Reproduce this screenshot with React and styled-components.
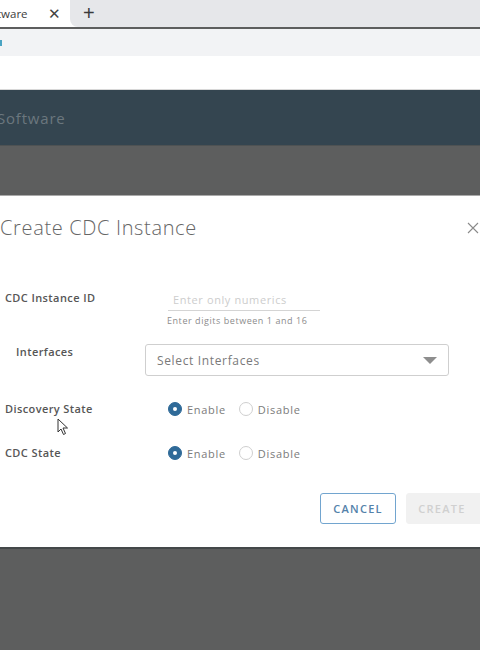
import React from "react";
import styled, { createGlobalStyle } from "styled-components";

const Global = createGlobalStyle`
  html, body { margin: 0; padding: 0; }
  body {
    width: 480px;
    height: 650px;
    overflow: hidden;
    background: #5d5e5e;
    font-family: "Open Sans", "Noto Sans", "Liberation Sans", sans-serif;
  }
  #root { width: 480px; height: 650px; }
`;

const Page = styled.div`
  width: 480px;
  height: 650px;
  display: flex;
  flex-direction: column;
  position: relative;
  overflow: hidden;
`;

const TabStrip = styled.div`
  height: 27px;
  display: flex;
  background: #ffffff;
`;

const ActiveTab = styled.div`
  width: 70px;
  display: flex;
  align-items: center;
  justify-content: space-between;
  padding: 0 9px 0 0;
  box-sizing: border-box;
  font-size: 11.5px;
  color: #3c3c3c;
`;

const TabText = styled.span`
  margin-left: -3px;
`;

const TabClose = styled.span`
  font-size: 15px;
  color: #444;
  font-family: "Liberation Sans", sans-serif;
`;

const TabRest = styled.div`
  flex: 1;
  background: #e6e7ea;
  border-bottom-left-radius: 8px;
  display: flex;
  align-items: center;
  padding-left: 13px;
  font-size: 20px;
  color: #3a3a3a;
  font-family: "Liberation Sans", sans-serif;
`;

const AddressBar = styled.div`
  height: 27px;
  margin-top: 2px;
  background: #f2f3f5;
  display: flex;
  align-items: center;
`;

const UrlTail = styled.span`
  width: 2px;
  height: 6px;
  background: #4aa3c2;
  display: block;
`;

const WhiteStrip = styled.div`
  height: 33px;
  background: #ffffff;
  border-bottom: 1px solid #d8d8d8;
`;

const AppHeader = styled.div`
  height: 55px;
  background: #344550;
  display: flex;
  align-items: center;
  border-bottom: 1px solid #4e5253;
`;

const Brand = styled.span`
  margin-left: -3px;
  font-size: 15px;
  color: #6b777e;
  letter-spacing: 0.8px;
`;

const Backdrop = styled.div`
  height: 49px;
  background: #5d5e5e;
  border-bottom: 1px solid #a9a9a9;
`;

const Modal = styled.div`
  height: 353px;
  background: #ffffff;
  box-sizing: border-box;
  padding-top: 20px;
  display: flex;
  flex-direction: column;
  border-bottom: 2px solid #444849;
`;

const TitleRow = styled.div`
  display: flex;
  align-items: center;
  justify-content: space-between;
  padding-right: 1px;
  height: 24px;
`;

const Title = styled.h2`
  margin: 0;
  font-size: 20px;
  line-height: 24px;
  font-weight: 300;
  color: #666;
  letter-spacing: 0.65px;
`;

const CloseBtn = styled.svg`
  width: 12px;
  height: 12px;
  display: block;
`;

const Form = styled.div`
  display: flex;
  flex-direction: column;
  padding-left: 5px;
  margin-top: 49px;
`;

const Row = styled.div`
  display: flex;
  align-items: flex-start;
  margin-top: ${(p) => p.$gap || 0}px;
`;

const Label = styled.div`
  width: ${(p) => 140 - (p.$indent || 0)}px;
  padding-left: ${(p) => p.$indent || 0}px;
  padding-top: ${(p) => p.$top || 0}px;
  font-size: 11px;
  line-height: ${(p) => p.$lh || 16}px;
  font-weight: 600;
  color: #565656;
  letter-spacing: 0.4px;
  flex-shrink: 0;
`;

const Control = styled.div`
  display: flex;
  flex-direction: column;
  padding-left: ${(p) => p.$offset || 0}px;
`;

const TextInput = styled.input`
  width: 152px;
  height: 22px;
  box-sizing: border-box;
  border: none;
  border-bottom: 1px solid #d4d4d4;
  padding: 0 0 0 5px;
  font-family: inherit;
  font-size: 11px;
  letter-spacing: 0.6px;
  outline: none;
  color: #555;
  &::placeholder { color: #cdcdcd; }
`;

const Helper = styled.div`
  margin-top: 4px;
  font-size: 9px;
  line-height: 12px;
  letter-spacing: 0.55px;
  color: #8c8c8c;
  margin-left: -1px;
`;

const Select = styled.div`
  width: 304px;
  height: 32px;
  box-sizing: border-box;
  border: 1px solid #cfcfcf;
  border-radius: 3px;
  display: flex;
  align-items: center;
  justify-content: space-between;
  padding: 0 11px 0 11px;
  font-size: 12px;
  letter-spacing: 0.65px;
  color: #7a7a7a;
`;

const Caret = styled.svg`
  width: 14px;
  height: 7px;
  display: block;
`;

const RadioGroup = styled.div`
  display: flex;
  align-items: center;
  height: 18px;
`;

const RadioItem = styled.label`
  display: flex;
  align-items: center;
  gap: 5px;
  margin-right: 13px;
  font-size: 11px;
  letter-spacing: 0.7px;
  color: #7b7b7b;
`;

const RadioDot = styled.span`
  width: 14px;
  height: 14px;
  box-sizing: border-box;
  border-radius: 50%;
  display: flex;
  align-items: center;
  justify-content: center;
  background: ${(p) => (p.$on ? "#2f6a98" : "#fff")};
  border: 1px solid ${(p) => (p.$on ? "#2f6a98" : "#cfcfcf")};
  &::after {
    content: "";
    width: 4px;
    height: 4px;
    border-radius: 50%;
    background: ${(p) => (p.$on ? "#fff" : "transparent")};
  }
`;

const Actions = styled.div`
  display: flex;
  gap: 10px;
  padding-left: 320px;
  margin-top: 31px;
`;

const Button = styled.button`
  height: 31px;
  width: ${(p) => p.$w}px;
  flex-shrink: 0;
  box-sizing: border-box;
  border-radius: 3px;
  font-family: inherit;
  font-size: 11px;
  font-weight: 600;
  letter-spacing: 1.3px;
  padding: 0 ${(p) => (p.$primary ? 8 : 0)}px 0 0;
  background: ${(p) => (p.$primary ? "#f1f1f1" : "#fff")};
  color: ${(p) => (p.$primary ? "#d0d0d0" : "#5482aa")};
  border: 1px solid ${(p) => (p.$primary ? "#f1f1f1" : "#72a5cf")};
`;

const Rest = styled.div`
  flex: 1;
  background: #5d5e5e;
`;

const Cursor = styled.svg`
  position: absolute;
  left: 57px;
  top: 418px;
  width: 12px;
  height: 18px;
`;

function Radio({ on, children }) {
  return (
    <RadioItem>
      <RadioDot $on={on} />
      {children}
    </RadioItem>
  );
}

export default function App() {
  return (
    <>
      <Global />
      <Page>
        <TabStrip>
          <ActiveTab>
            <TabText>tware</TabText>
            <TabClose>✕</TabClose>
          </ActiveTab>
          <TabRest>+</TabRest>
        </TabStrip>
        <AddressBar>
          <UrlTail />
        </AddressBar>
        <WhiteStrip />
        <AppHeader>
          <Brand>Software</Brand>
        </AppHeader>
        <Backdrop />
        <Modal>
          <TitleRow>
            <Title>Create CDC Instance</Title>
            <CloseBtn viewBox="0 0 12 12">
              <path d="M1 1 L11 11 M11 1 L1 11" stroke="#8a8a8a" strokeWidth="1.1" fill="none" />
            </CloseBtn>
          </TitleRow>
          <Form>
            <Row>
              <Label $lh={16} $top={1}>CDC Instance ID</Label>
              <Control $offset={23}>
                <TextInput placeholder="Enter only numerics" />
                <Helper>Enter digits between 1 and 16</Helper>
              </Control>
            </Row>
            <Row $gap={17}>
              <Label $indent={11} $top={0}>Interfaces</Label>
              <Control>
                <Select>
                  <span>Select Interfaces</span>
                  <Caret viewBox="0 0 14 7">
                    <path d="M0 0 H14 L7 7 Z" fill="#8e8e8e" />
                  </Caret>
                </Select>
              </Control>
            </Row>
            <Row $gap={24}>
              <Label $lh={18}>Discovery State</Label>
              <Control $offset={23}>
                <RadioGroup>
                  <Radio on>Enable</Radio>
                  <Radio>Disable</Radio>
                </RadioGroup>
              </Control>
            </Row>
            <Row $gap={26}>
              <Label $lh={18}>CDC State</Label>
              <Control $offset={23}>
                <RadioGroup>
                  <Radio on>Enable</Radio>
                  <Radio>Disable</Radio>
                </RadioGroup>
              </Control>
            </Row>
          </Form>
          <Actions>
            <Button $w={76}>CANCEL</Button>
            <Button $w={80} $primary>CREATE</Button>
          </Actions>
        </Modal>
        <Rest />
        <Cursor viewBox="0 0 12 18">
          <path d="M1 1 L1 14 L4 11 L6.5 16.5 L8.5 15.5 L6 10 L10.5 10 Z" fill="#fff" stroke="#333" strokeWidth="1" strokeLinejoin="round" />
        </Cursor>
      </Page>
    </>
  );
}
